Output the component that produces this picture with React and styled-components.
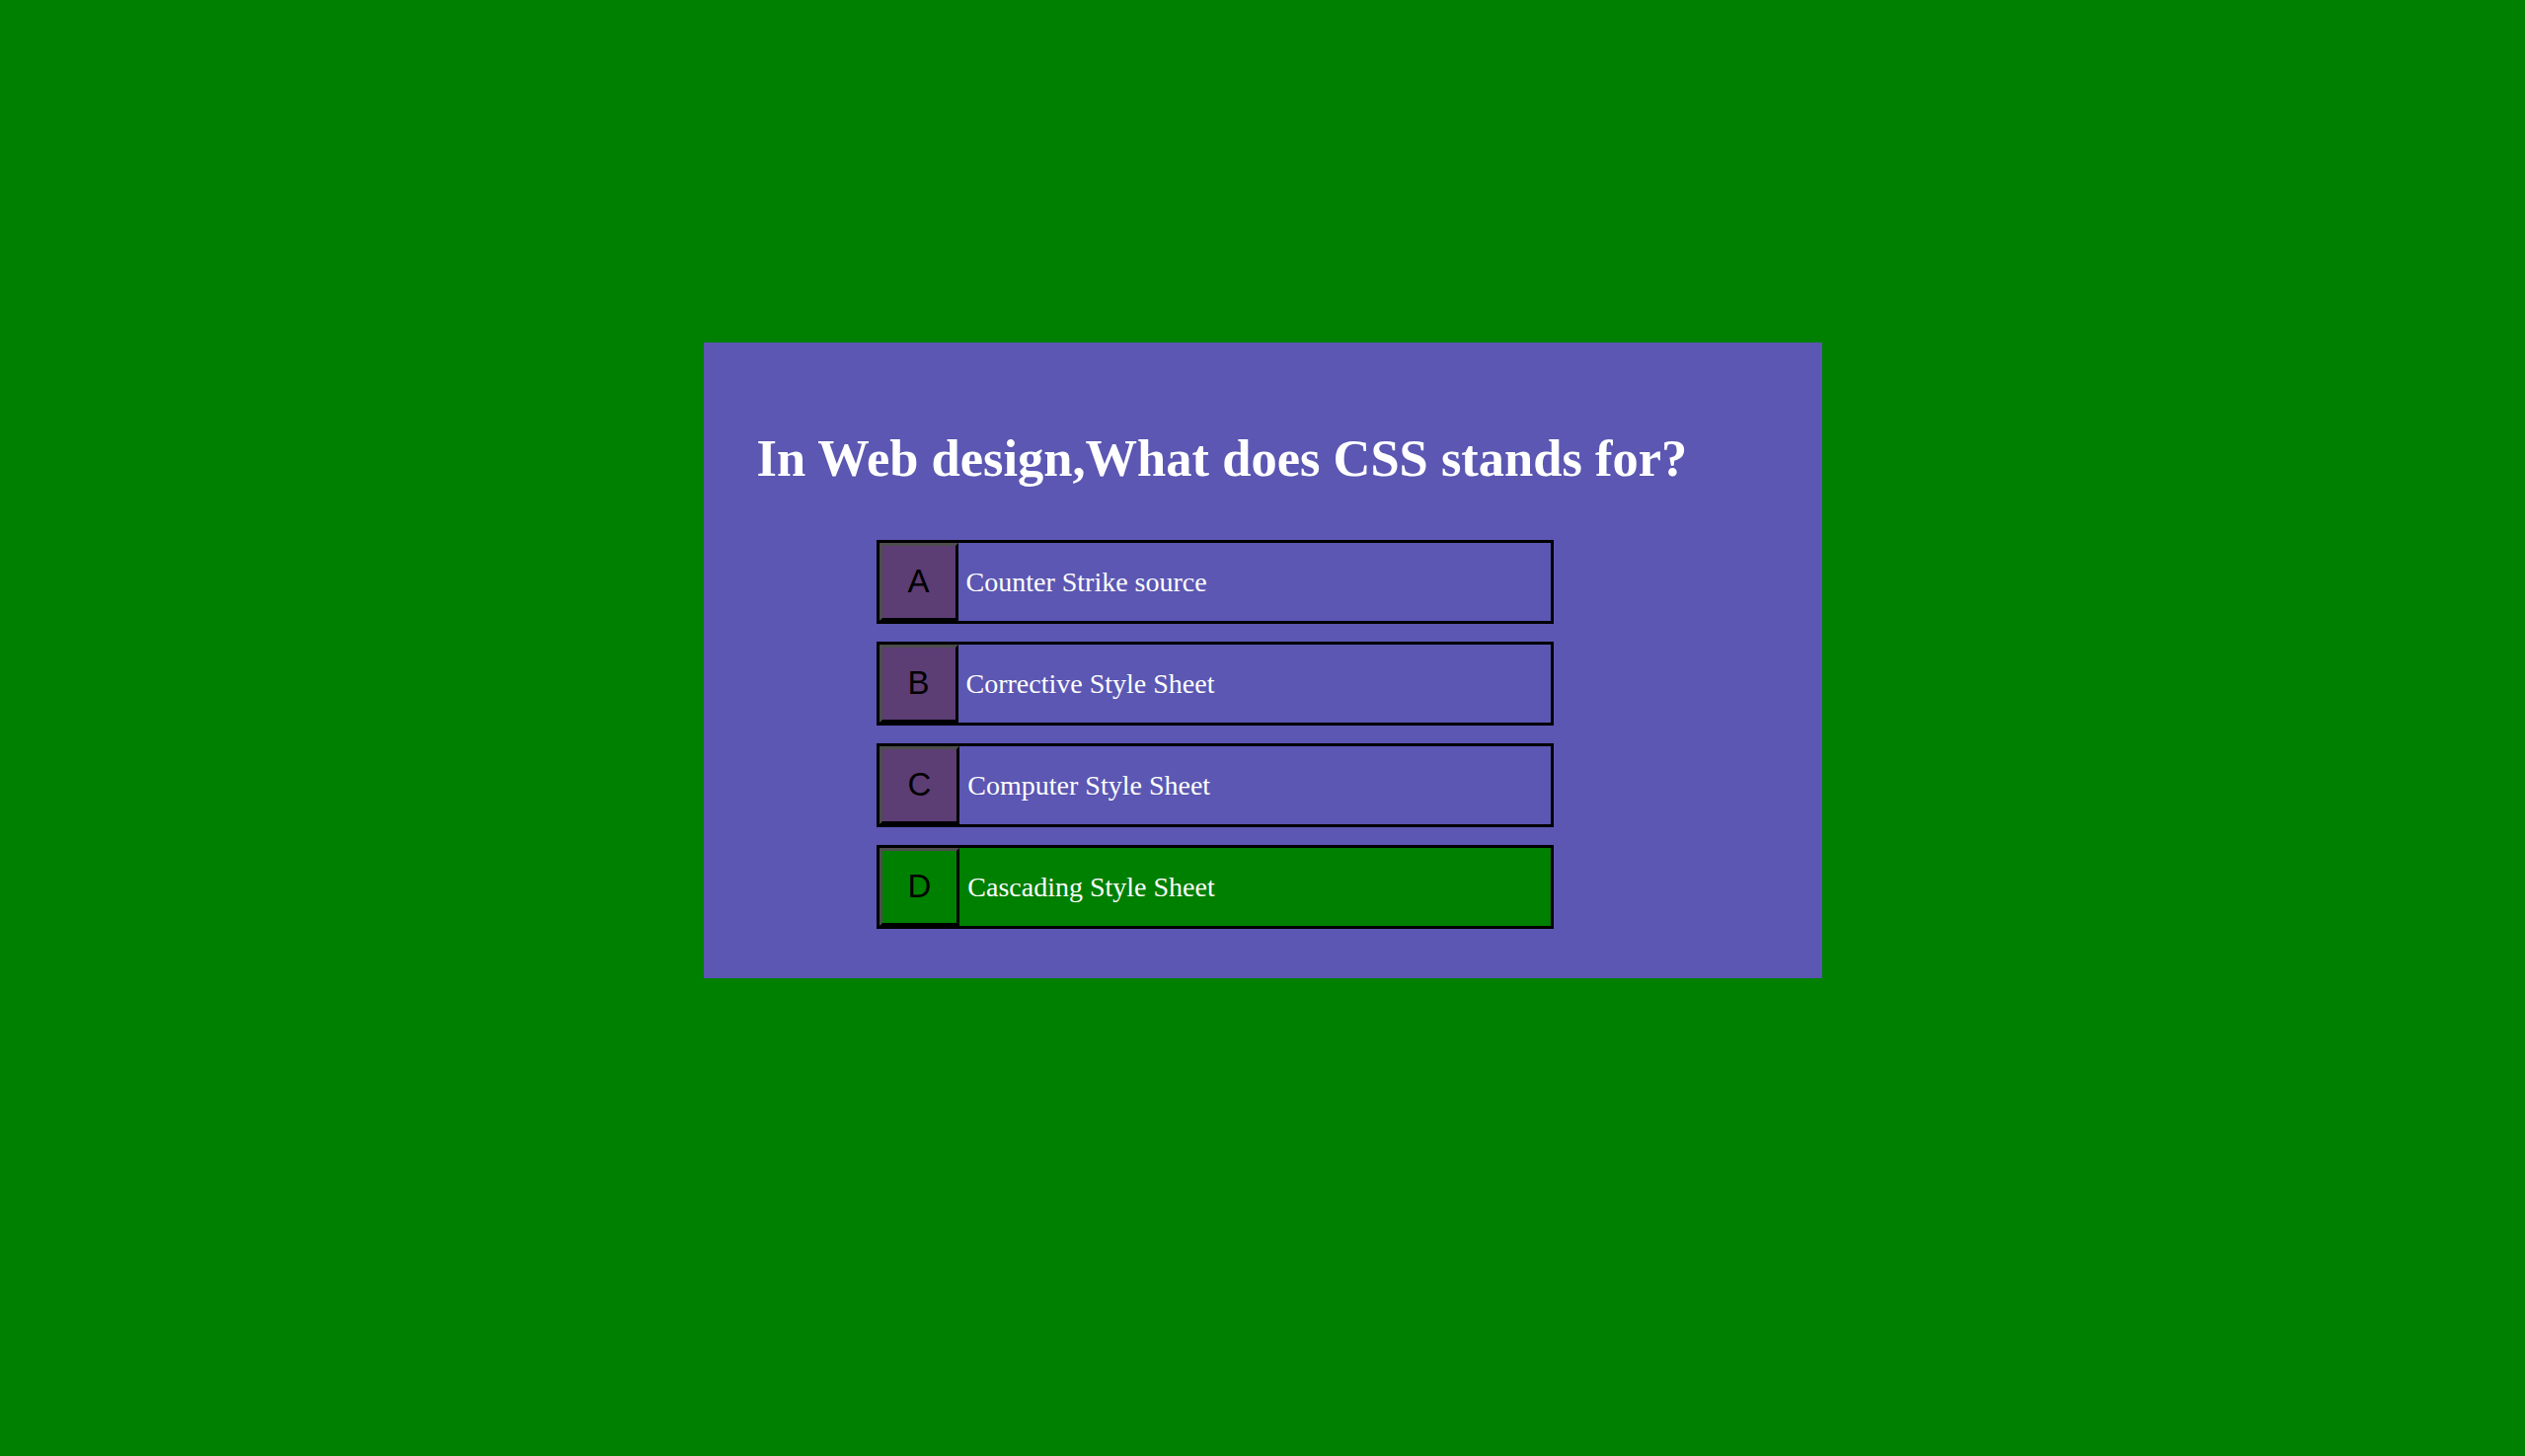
import React from "react";
import styled, { createGlobalStyle } from "styled-components";

const GlobalStyle = createGlobalStyle`
  html, body {
    margin: 0;
    padding: 0;
    background: #008000;
  }
  body {
    min-height: 1475px;
    font-family: "Liberation Serif", "Times New Roman", serif;
  }
`;

const Page = styled.main`
  display: flex;
  justify-content: center;
  padding-top: 347px;
`;

const Card = styled.section`
  width: 1133px;
  box-sizing: border-box;
  padding: 88px 50px 50px 54px;
  background: #5b57b2;
`;

const Question = styled.h1`
  margin: 0 0 54px;
  font-family: "Liberation Serif", "Times New Roman", serif;
  font-weight: bold;
  font-size: 52.5px;
  line-height: 58px;
  color: #fff;
`;

const Options = styled.ul`
  list-style: none;
  margin: 0 0 0 121px;
  padding: 0;
  display: flex;
  flex-direction: column;
  gap: 18px;
  width: 686px;
`;

const Option = styled.li`
  display: flex;
  align-items: stretch;
  height: 85px;
  box-sizing: border-box;
  border: 3px solid #000;
  background: ${(p) => (p.$correct ? "#008000" : "transparent")};
  cursor: pointer;
`;

const Letter = styled.span`
  display: flex;
  align-items: center;
  justify-content: center;
  padding: 0 26px 2px;
  border: 3px solid;
  border-color: #4d4d4d #000 #000 #4d4d4d;
  background: ${(p) => (p.$correct ? "#008000" : "#5c3d74")};
  font-family: "Liberation Sans", Arial, sans-serif;
  font-size: 33px;
  color: #000;
`;

const Answer = styled.span`
  display: flex;
  align-items: center;
  padding-left: 8px;
  font-size: 28px;
  color: #fff;
`;

const answers = [
  { id: "A", text: "Counter Strike source" },
  { id: "B", text: "Corrective Style Sheet" },
  { id: "C", text: "Computer Style Sheet" },
  { id: "D", text: "Cascading Style Sheet", correct: true },
];

function App() {
  return (
    <>
      <GlobalStyle />
      <Page>
        <Card>
          <Question>In Web design,What does CSS stands for?</Question>
          <Options>
            {answers.map((a) => (
              <Option key={a.id} $correct={a.correct}>
                <Letter $correct={a.correct}>{a.id}</Letter>
                <Answer>{a.text}</Answer>
              </Option>
            ))}
          </Options>
        </Card>
      </Page>
    </>
  );
}

export default App;
